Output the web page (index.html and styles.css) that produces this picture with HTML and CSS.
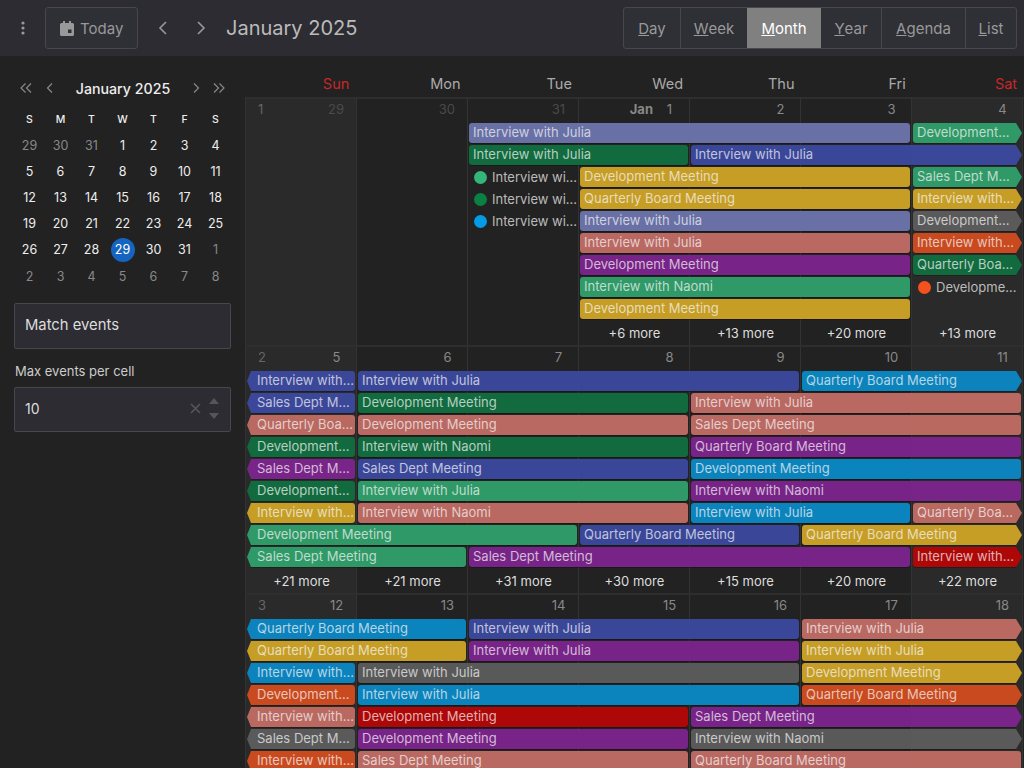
FILE: index.html
```html
<!DOCTYPE html>
<html lang="en">
<head>
    <meta charset="UTF-8">
    <meta name="viewport" content="width=device-width, initial-scale=1.0">
    <title>Month Calendar</title>
    <link rel="stylesheet" href="styles.css">
</head>
<body>

<header class="toolbar">
    <button class="icon-btn kebab" aria-label="Menu">
        <svg width="4" height="14" viewBox="0 0 4 14"><circle cx="2" cy="2" r="1.6"/><circle cx="2" cy="7" r="1.6"/><circle cx="2" cy="12" r="1.6"/></svg>
    </button>
    <button class="today-btn">
        <svg width="14" height="15" viewBox="0 0 14 15"><path d="M3 0h2v2h4V0h2v2h1.500A1.500 1.500 0 0 1 14 3.500v10a1.500 1.500 0 0 1-1.500 1.500h-11A1.500 1.500 0 0 1 0 13.500v-10A1.500 1.500 0 0 1 1.500 2H3z"/><rect x="8" y="8.500" width="3.500" height="3.500" fill="#2f2f36"/></svg>
        Today
    </button>
    <button class="icon-btn nav-prev" aria-label="Previous">
        <svg width="9" height="14" viewBox="0 0 9 14"><path d="M8 1 2 7l6 6"/></svg>
    </button>
    <button class="icon-btn nav-next" aria-label="Next">
        <svg width="9" height="14" viewBox="0 0 9 14"><path d="m1 1 6 6-6 6"/></svg>
    </button>
    <h1 class="title">January 2025</h1>
    <div class="views">
        <a class="view v-day"><u>D</u>ay</a>
        <a class="view v-week"><u>W</u>eek</a>
        <a class="view v-month active"><u>M</u>onth</a>
        <a class="view v-year"><u>Y</u>ear</a>
        <a class="view v-agenda"><u>A</u>genda</a>
        <a class="view v-list"><u>L</u>ist</a>
    </div>
</header>

<div class="layout">
    <aside class="sidebar">
        <div class="mini-nav">
            <svg width="12" height="10" viewBox="0 0 12 10"><path d="M5.500 .5 1 5l4.500 4.500M11 .5 6.500 5 11 9.500"/></svg>
            <svg class="mini-prev" width="7" height="10" viewBox="0 0 7 10"><path d="M6 .5 1.500 5 6 9.500"/></svg>
            <span class="mini-title">January 2025</span>
            <svg class="mini-next" width="7" height="10" viewBox="0 0 7 10"><path d="M1 .5 5.500 5 1 9.500"/></svg>
            <svg width="12" height="10" viewBox="0 0 12 10"><path d="M1 .5 5.500 5 1 9.500M6.500 .5 11 5l-4.500 4.500"/></svg>
        </div>
        <div class="mini-grid">
            <b>S</b><b>M</b><b>T</b><b>W</b><b>T</b><b>F</b><b>S</b>
            <span class="off">29</span><span class="off">30</span><span class="off">31</span><span>1</span><span>2</span><span>3</span><span>4</span>
            <span>5</span><span>6</span><span>7</span><span>8</span><span>9</span><span>10</span><span>11</span>
            <span>12</span><span>13</span><span>14</span><span>15</span><span>16</span><span>17</span><span>18</span>
            <span>19</span><span>20</span><span>21</span><span>22</span><span>23</span><span>24</span><span>25</span>
            <span>26</span><span>27</span><span>28</span><span class="now">29</span><span>30</span><span>31</span><span class="off">1</span>
            <span class="off">2</span><span class="off">3</span><span class="off">4</span><span class="off">5</span><span class="off">6</span><span class="off">7</span><span class="off">8</span>
        </div>
        <div class="match-box">Match events</div>
        <label class="field-label" for="maxEvents">Max events per cell</label>
        <div class="number-box">
            <span id="maxEvents" class="number-value">10</span>
            <svg class="clear" width="11" height="11" viewBox="0 0 11 11"><path d="m1 1 9 9M10 1l-9 9"/></svg>
            <span class="spin">
                <svg width="10" height="6" viewBox="0 0 10 6"><path d="M5 0l5 6H0z"/></svg>
                <svg width="10" height="6" viewBox="0 0 10 6"><path d="M5 6 0 0h10z"/></svg>
            </span>
        </div>
    </aside>

    <main class="month">
        <div class="weekdays">
            <span class="red">Sun</span><span>Mon</span><span>Tue</span><span>Wed</span><span>Thu</span><span>Fri</span><span class="red">Sat</span>
        </div>

        <!-- week 1 -->
        <section class="week">
            <div class="cell wkend"><span class="wk">1</span><span class="num dim">29</span></div>
            <div class="cell"><span class="num dim">30</span></div>
            <div class="cell"><span class="num dim">31</span></div>
            <div class="cell"><span class="mon-name">Jan</span><span class="num">1</span></div>
            <div class="cell"><span class="num">2</span></div>
            <div class="cell"><span class="num">3</span></div>
            <div class="cell wkend"><span class="num">4</span></div>

            <div class="ev peri l1 s3 w4">Interview with Julia</div>
            <div class="ev teal l1 s7 w1 to">Development…</div>
            <div class="ev green l2 s3 w2">Interview with Julia</div>
            <div class="ev blue l2 s5 w3 to">Interview with Julia</div>
            <div class="dot-ev l3 s3 w1"><i class="d-mint"></i>Interview wi…</div>
            <div class="ev gold l3 s4 w3">Development Meeting</div>
            <div class="ev teal l3 s7 w1 to">Sales Dept M…</div>
            <div class="dot-ev l4 s3 w1"><i class="d-green"></i>Interview wi…</div>
            <div class="ev gold l4 s4 w3">Quarterly Board Meeting</div>
            <div class="ev gold l4 s7 w1 to">Interview with…</div>
            <div class="dot-ev l5 s3 w1"><i class="d-sky"></i>Interview wi…</div>
            <div class="ev peri l5 s4 w3">Interview with Julia</div>
            <div class="ev grey l5 s7 w1 to">Development…</div>
            <div class="ev salmon l6 s4 w3">Interview with Julia</div>
            <div class="ev orange l6 s7 w1 to">Interview with…</div>
            <div class="ev purple l7 s4 w3">Development Meeting</div>
            <div class="ev green l7 s7 w1 to">Quarterly Boa…</div>
            <div class="ev teal l8 s4 w3">Interview with Naomi</div>
            <div class="dot-ev l8 s7 w1"><i class="d-orange"></i>Developme…</div>
            <div class="ev gold l9 s4 w3">Development Meeting</div>

            <a class="more s4">+6 more</a>
            <a class="more s5">+13 more</a>
            <a class="more s6">+20 more</a>
            <a class="more s7">+13 more</a>
        </section>

        <!-- week 2 -->
        <section class="week">
            <div class="cell wkend"><span class="wk">2</span><span class="num">5</span></div>
            <div class="cell"><span class="num">6</span></div>
            <div class="cell"><span class="num">7</span></div>
            <div class="cell"><span class="num">8</span></div>
            <div class="cell"><span class="num">9</span></div>
            <div class="cell"><span class="num">10</span></div>
            <div class="cell wkend"><span class="num">11</span></div>

            <div class="ev blue l1 s1 w1 from">Interview with…</div>
            <div class="ev blue l1 s2 w4">Interview with Julia</div>
            <div class="ev sky l1 s6 w2 to">Quarterly Board Meeting</div>
            <div class="ev blue l2 s1 w1 from">Sales Dept M…</div>
            <div class="ev green l2 s2 w3">Development Meeting</div>
            <div class="ev salmon l2 s5 w3">Interview with Julia</div>
            <div class="ev salmon l3 s1 w1 from">Quarterly Boa…</div>
            <div class="ev salmon l3 s2 w3">Development Meeting</div>
            <div class="ev salmon l3 s5 w3">Sales Dept Meeting</div>
            <div class="ev green l4 s1 w1 from">Development…</div>
            <div class="ev green l4 s2 w3">Interview with Naomi</div>
            <div class="ev purple l4 s5 w3">Quarterly Board Meeting</div>
            <div class="ev purple l5 s1 w1 from">Sales Dept M…</div>
            <div class="ev blue l5 s2 w3">Sales Dept Meeting</div>
            <div class="ev sky l5 s5 w3">Development Meeting</div>
            <div class="ev green l6 s1 w1 from">Development…</div>
            <div class="ev teal l6 s2 w3">Interview with Julia</div>
            <div class="ev purple l6 s5 w3">Interview with Naomi</div>
            <div class="ev gold l7 s1 w1 from">Interview with…</div>
            <div class="ev salmon l7 s2 w3">Interview with Naomi</div>
            <div class="ev sky l7 s5 w2">Interview with Julia</div>
            <div class="ev salmon l7 s7 w1 to">Quarterly Boa…</div>
            <div class="ev teal l8 s1 w3 from">Development Meeting</div>
            <div class="ev blue l8 s4 w2">Quarterly Board Meeting</div>
            <div class="ev gold l8 s6 w2 to">Quarterly Board Meeting</div>
            <div class="ev teal l9 s1 w2 from">Sales Dept Meeting</div>
            <div class="ev purple l9 s3 w4">Sales Dept Meeting</div>
            <div class="ev red l9 s7 w1 to">Interview with…</div>

            <a class="more s1">+21 more</a>
            <a class="more s2">+21 more</a>
            <a class="more s3">+31 more</a>
            <a class="more s4">+30 more</a>
            <a class="more s5">+15 more</a>
            <a class="more s6">+20 more</a>
            <a class="more s7">+22 more</a>
        </section>

        <!-- week 3 -->
        <section class="week">
            <div class="cell wkend"><span class="wk">3</span><span class="num">12</span></div>
            <div class="cell"><span class="num">13</span></div>
            <div class="cell"><span class="num">14</span></div>
            <div class="cell"><span class="num">15</span></div>
            <div class="cell"><span class="num">16</span></div>
            <div class="cell"><span class="num">17</span></div>
            <div class="cell wkend"><span class="num">18</span></div>

            <div class="ev sky l1 s1 w2 from">Quarterly Board Meeting</div>
            <div class="ev blue l1 s3 w3">Interview with Julia</div>
            <div class="ev salmon l1 s6 w2 to">Interview with Julia</div>
            <div class="ev gold l2 s1 w2 from">Quarterly Board Meeting</div>
            <div class="ev purple l2 s3 w3">Interview with Julia</div>
            <div class="ev gold l2 s6 w2 to">Interview with Julia</div>
            <div class="ev sky l3 s1 w1 from">Interview with…</div>
            <div class="ev grey l3 s2 w4">Interview with Julia</div>
            <div class="ev gold l3 s6 w2 to">Development Meeting</div>
            <div class="ev orange l4 s1 w1 from">Development…</div>
            <div class="ev sky l4 s2 w4">Interview with Julia</div>
            <div class="ev orange l4 s6 w2 to">Quarterly Board Meeting</div>
            <div class="ev salmon l5 s1 w1 from">Interview with…</div>
            <div class="ev red l5 s2 w3">Development Meeting</div>
            <div class="ev purple l5 s5 w3 to">Sales Dept Meeting</div>
            <div class="ev grey l6 s1 w1 from">Sales Dept M…</div>
            <div class="ev purple l6 s2 w3">Development Meeting</div>
            <div class="ev grey l6 s5 w3 to">Interview with Naomi</div>
            <div class="ev orange l7 s1 w1 from">Interview with…</div>
            <div class="ev salmon l7 s2 w3">Sales Dept Meeting</div>
            <div class="ev salmon l7 s5 w3">Quarterly Board Meeting</div>
        </section>
    </main>
</div>

</body>
</html>
```
FILE: styles.css
```css
/* Global Styles */
* {
    margin: 0;
    padding: 0;
    box-sizing: border-box;
}

html, body {
    height: 768px;
    overflow: hidden;
}

body {
    font-family: 'Inter', sans-serif;
    background-color: #222222;
    color: #dddddd;
}

/* Toolbar */
.toolbar {
    height: 56px;
    background-color: #2c2c32;
    display: flex;
    align-items: center;
    padding: 0 7px 0 21px;
}

button {
    font-family: inherit;
    border: none;
    background: none;
    color: #999999;
}

.icon-btn {
    display: flex;
    align-items: center;
    justify-content: center;
}

.icon-btn svg {
    fill: #999999;
}

.nav-prev svg, .nav-next svg {
    fill: none;
    stroke: #999999;
    stroke-width: 1.6;
}

.kebab {
    width: 4px;
    margin-right: 20px;
}

.today-btn {
    width: 93px;
    height: 42px;
    display: flex;
    align-items: center;
    gap: 6px;
    padding-left: 14px;
    background-color: #2f2f36;
    border: 1px solid #47474d;
    border-radius: 3px;
    font-size: 15px;
}

.today-btn svg {
    fill: #999999;
    flex: none;
}

.nav-prev {
    margin-left: 20px;
    width: 9px;
}

.nav-next {
    margin-left: 30px;
    width: 9px;
}

.title {
    margin-left: 20px;
    font-size: 20px;
    font-weight: 400;
    color: #bbbbbb;
}

.views {
    margin-left: auto;
    display: flex;
    height: 42px;
    background-color: #2f2f36;
    border: 1px solid #47474d;
    border-radius: 3px;
}

.view {
    display: flex;
    align-items: center;
    justify-content: center;
    font-size: 15px;
    color: #999999;
    border-right: 1px solid #47474d;
}

.view:last-child {
    border-right: none;
}

.v-day { width: 57px; }
.v-week { width: 67px; }
.v-month { width: 74px; }
.v-year { width: 61px; }
.v-agenda { width: 84px; }
.v-list { width: 50px; }

.view.active {
    margin-left: -1px;
    background-color: #808080;
    color: #ffffff;
    border-right: none;
}

/* Layout */
.layout {
    display: flex;
    height: 712px;
    overflow: hidden;
}

.sidebar {
    width: 245px;
    flex: none;
    padding: 0 14px;
}

/* Mini calendar */
.mini-nav {
    height: 20px;
    margin-top: 22px;
    display: flex;
    align-items: center;
    padding: 0 6px;
}

.mini-nav svg {
    fill: none;
    stroke: #888888;
    stroke-width: 1.2;
    flex: none;
}

.mini-prev { margin-left: 14px; }
.mini-next { margin-right: 13px; }

.mini-title {
    flex: 1;
    text-align: center;
    font-size: 14.200px;
    font-weight: 500;
    color: #eeeeee;
}

.mini-grid {
    display: grid;
    grid-template-columns: repeat(7, 31px);
    grid-template-rows: 25px repeat(6, 26.200px);
    height: 182px;
    margin-top: 9px;
    width: 217px;
}

.mini-grid b, .mini-grid span {
    display: flex;
    align-items: center;
    justify-content: center;
    font-weight: 400;
    font-size: 12.500px;
    color: #eeeeee;
}

.mini-grid b {
    font-size: 10.500px;
    font-weight: 500;
}

.mini-grid .off {
    color: #888888;
}

.mini-grid .now {
    background-color: #1565c0;
    border-radius: 50%;
    width: 24px;
    height: 24px;
    align-self: center;
    justify-self: center;
    color: #ffffff;
}

.match-box {
    margin-top: 14px;
    height: 46px;
    display: flex;
    align-items: center;
    padding: 0 0 2px 10px;
    font-size: 14.800px;
    color: #dddddd;
    background-color: #2c2c32;
    border: 1px solid #47474d;
    border-radius: 2px;
}

.field-label {
    display: block;
    margin: 14px 0 0 1px;
    font-size: 13px;
    line-height: 17px;
    color: #cccccc;
}

.number-box {
    margin-top: 7px;
    height: 45px;
    display: flex;
    align-items: center;
    padding: 0 11px 2px 10px;
    background-color: #2c2c32;
    border: 1px solid #47474d;
    border-radius: 2px;
}

.number-value {
    font-size: 14px;
    flex: 1;
    margin-bottom: 1px;
}

.clear {
    fill: none;
    stroke: #55555a;
    stroke-width: 1.6;
    margin-right: 8px;
}

.spin {
    display: flex;
    flex-direction: column;
    gap: 9px;
}

.spin svg {
    display: block;
    fill: #55555a;
}

/* Month grid */
.month {
    width: 779px;
    flex: none;
}

.weekdays {
    height: 41px;
    display: grid;
    grid-template-columns: repeat(7, 111.300px);
    padding-top: 20px;
}

.weekdays span {
    text-align: right;
    padding-right: 7px;
    font-size: 14.500px;
    line-height: 16px;
    color: #aaaaaa;
}

.weekdays .red {
    color: #c62828;
}

.week {
    display: grid;
    grid-template-columns: repeat(7, 111px);
    grid-template-rows: 24px repeat(9, 22px) 24px;
    height: 248px;
    border-left: 1px solid #333333;
    border-top: 2px solid #2e2e2e;
}

.cell {
    grid-row: 1 / -1;
    display: flex;
    justify-content: flex-end;
    align-items: flex-start;
    padding: 2px 5px 0 0;
    border-right: 1px solid #333333;
}

.cell:nth-child(1) { grid-column: 1; }
.cell:nth-child(2) { grid-column: 2; }
.cell:nth-child(3) { grid-column: 3; }
.cell:nth-child(4) { grid-column: 4; }
.cell:nth-child(5) { grid-column: 5; }
.cell:nth-child(6) { grid-column: 6; }
.cell:nth-child(7) { grid-column: 7; }

.cell.wkend {
    background-color: #2a2a2a;
}

/* one digit days sit centred in the width of two digits */
.num {
    min-width: 15px;
    margin-right: 7px;
    text-align: center;
    font-size: 13px;
    line-height: 17px;
    color: #888888;
}

.num.dim {
    color: #4a4a4a;
}

.wk {
    margin-right: auto;
    padding-left: 12px;
    font-size: 13px;
    line-height: 17px;
    color: #666666;
}

.mon-name {
    margin-right: 9px;
    font-size: 13px;
    font-weight: 700;
    line-height: 17px;
    color: #888888;
}

/* Events */
.l1 { grid-row: 2; }
.l2 { grid-row: 3; }
.l3 { grid-row: 4; }
.l4 { grid-row: 5; }
.l5 { grid-row: 6; }
.l6 { grid-row: 7; }
.l7 { grid-row: 8; }
.l8 { grid-row: 9; }
.l9 { grid-row: 10; }

.s1 { grid-column-start: 1; }
.s2 { grid-column-start: 2; }
.s3 { grid-column-start: 3; }
.s4 { grid-column-start: 4; }
.s5 { grid-column-start: 5; }
.s6 { grid-column-start: 6; }
.s7 { grid-column-start: 7; }

.w1 { grid-column-end: span 1; }
.w2 { grid-column-end: span 2; }
.w3 { grid-column-end: span 3; }
.w4 { grid-column-end: span 4; }

.ev {
    position: relative;
    height: 20px;
    margin: 0 2px 0 1px;
    padding-left: 4px;
    min-width: 0;
    font-size: 13px;
    line-height: 19px;
    white-space: nowrap;
    color: rgba(255, 255, 255, 0.72);
    background-color: var(--ev);
    border-radius: 3px;
    box-shadow: 0 1px 0 rgba(0, 0, 0, 0.25);
    opacity: 0.96;
}

/* continued events get a pointed end */
.ev.to {
    margin-right: 7px;
    border-radius: 3px 0 0 3px;
}

.ev.to::after {
    content: "";
    position: absolute;
    top: 0;
    right: -6px;
    border-left: 6px solid var(--ev);
    border-top: 10px solid transparent;
    border-bottom: 10px solid transparent;
}

.ev.from {
    margin-left: 5px;
    padding-left: 6px;
    border-radius: 0 3px 3px 0;
}

.ev.from::before {
    content: "";
    position: absolute;
    top: 0;
    left: -4px;
    border-right: 4px solid var(--ev);
    border-top: 10px solid transparent;
    border-bottom: 10px solid transparent;
}

.peri { --ev: #6b74ab; }
.green { --ev: #116e40; }
.blue { --ev: #3c499e; }
.gold { --ev: #cda326; }
.salmon { --ev: #c06c64; }
.purple { --ev: #7c248c; }
.teal { --ev: #309e6a; }
.sky { --ev: #0b87c4; }
.grey { --ev: #5c5c5c; }
.orange { --ev: #d04c1f; }
.red { --ev: #b40606; }

.dot-ev {
    height: 20px;
    display: flex;
    align-items: center;
    gap: 5px;
    padding-left: 6px;
    min-width: 0;
    font-size: 13px;
    white-space: nowrap;
    color: #bbbbbb;
}

.dot-ev i {
    width: 13px;
    height: 13px;
    flex: none;
    border-radius: 50%;
}

.d-mint { background-color: #33b679; }
.d-green { background-color: #0b8043; }
.d-sky { background-color: #039be5; }
.d-orange { background-color: #f4511e; }

.more {
    grid-row: 11;
    text-align: center;
    font-size: 13px;
    line-height: 24px;
    color: #dddddd;
}
```
